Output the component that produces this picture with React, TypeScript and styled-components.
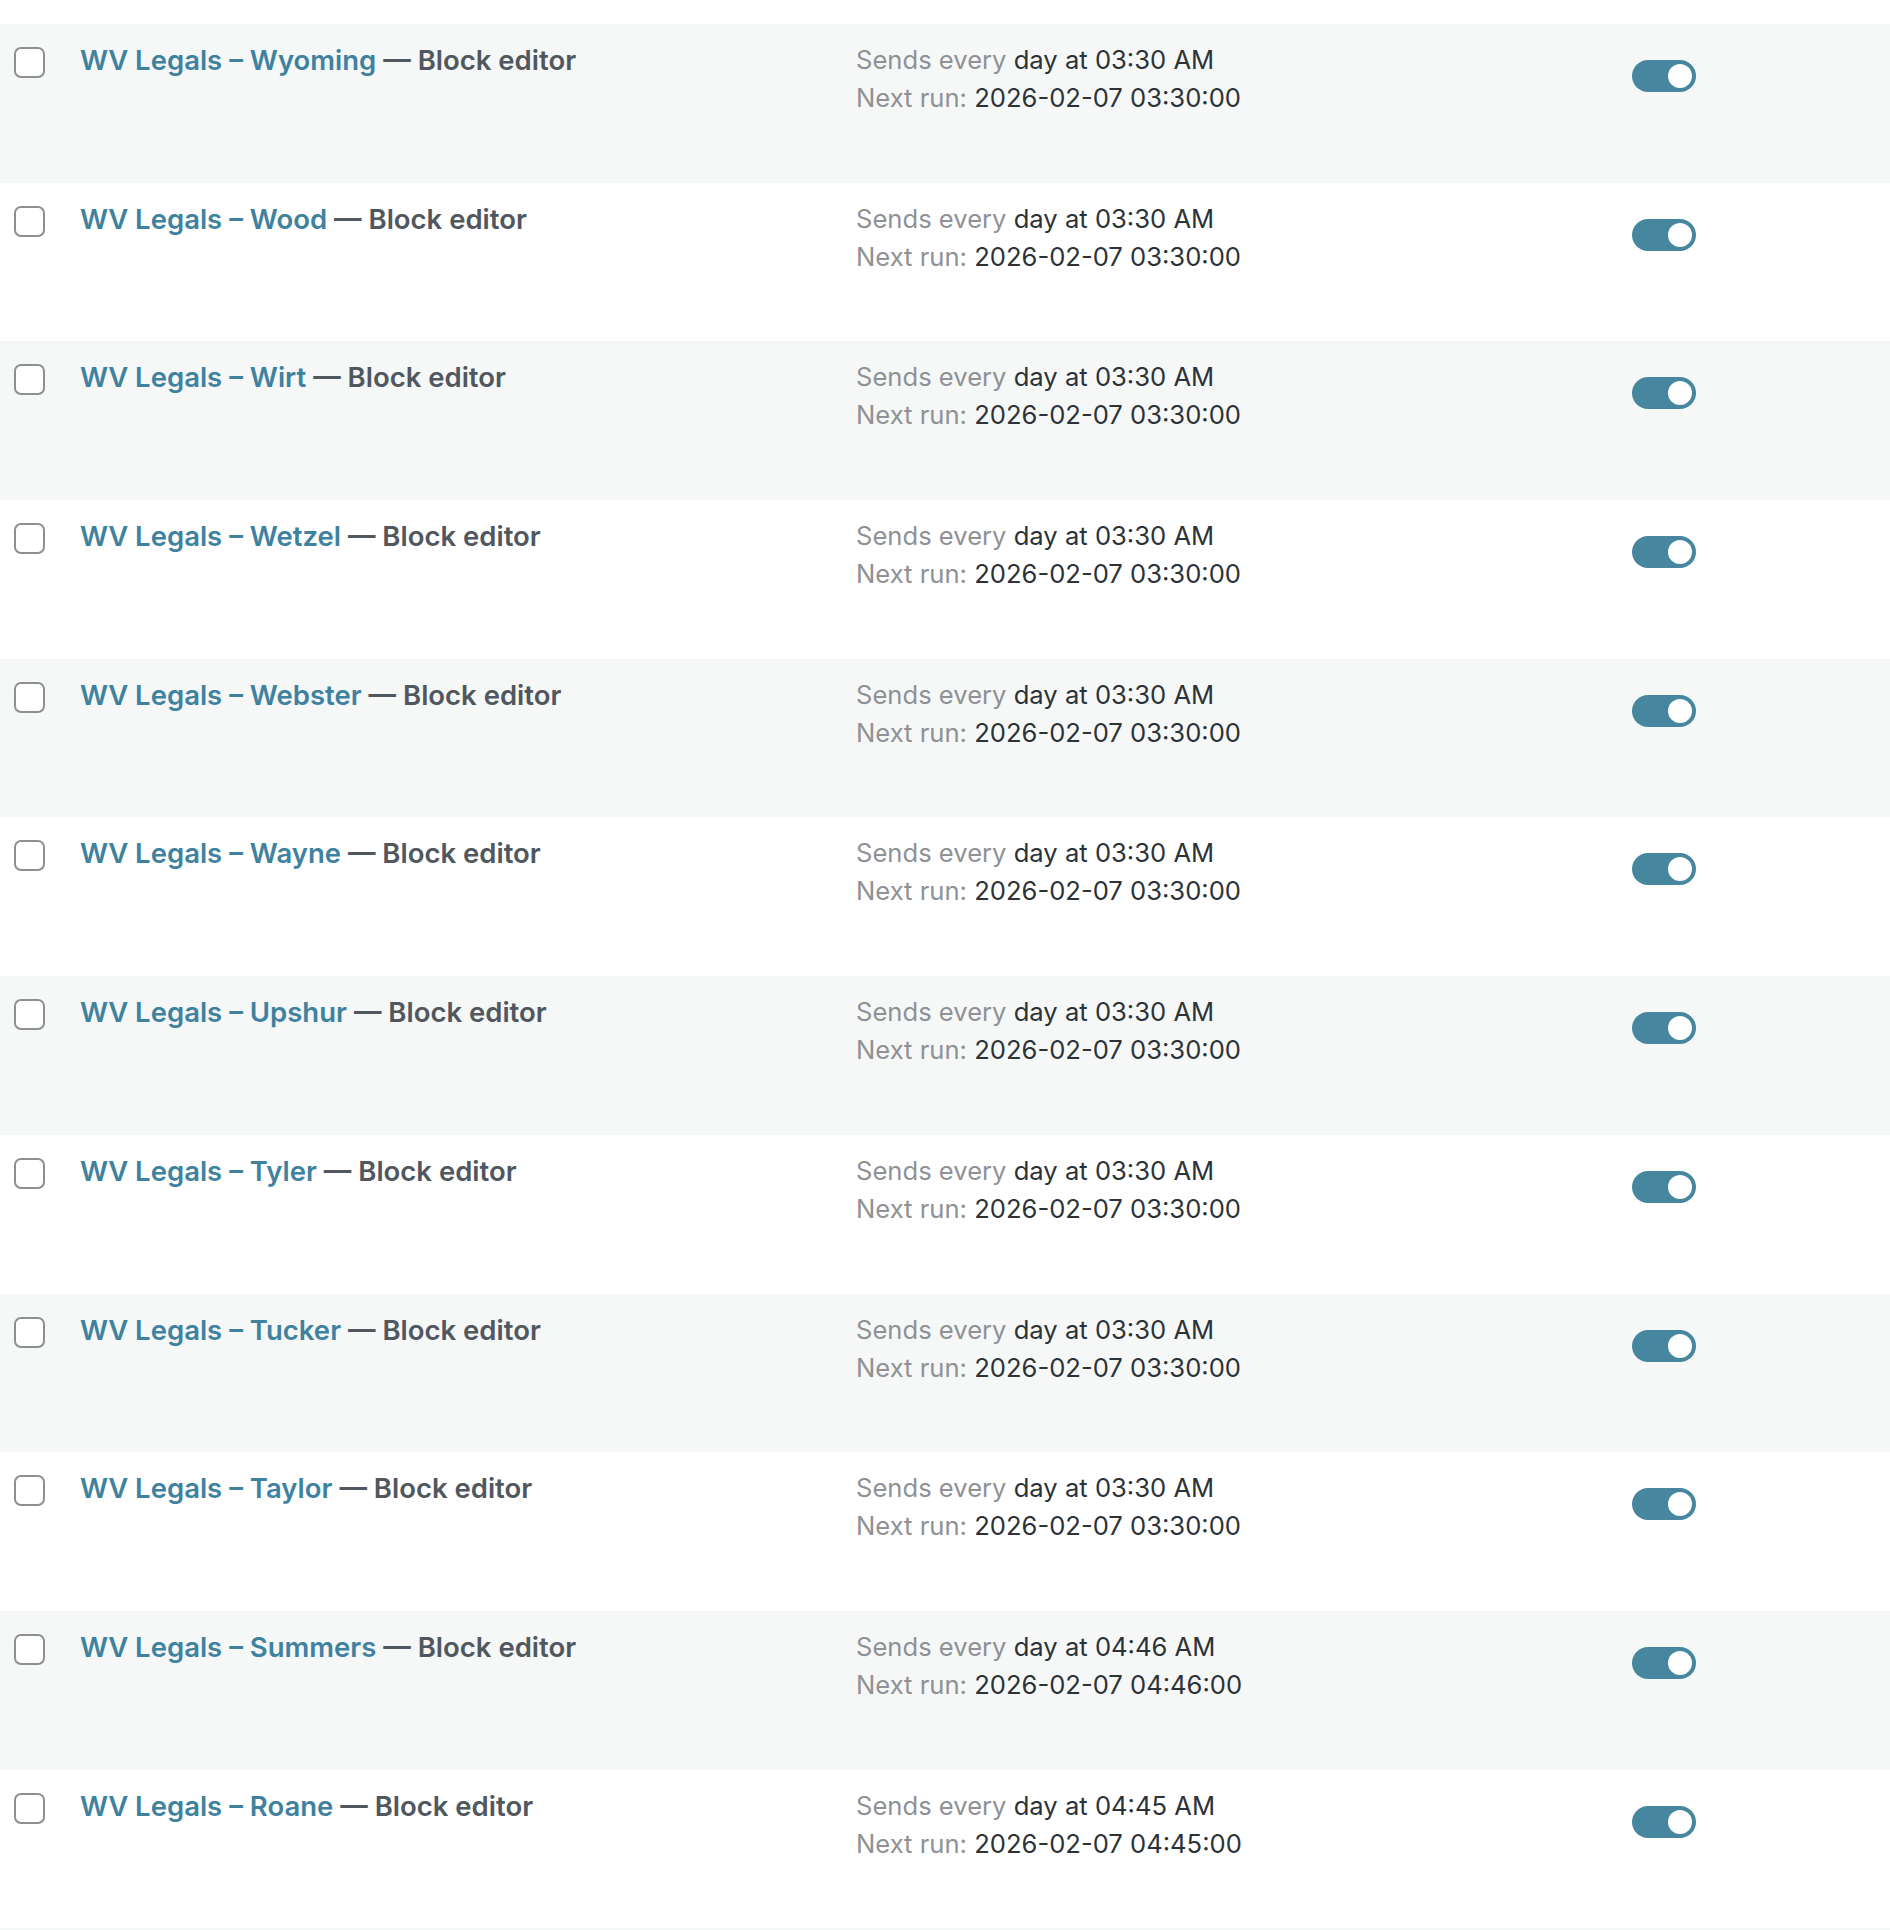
import React from 'react'
import { createGlobalStyle, styled } from 'styled-components'

const GlobalStyle = createGlobalStyle`
  html, body {
    margin: 0;
    padding: 0;
    background: #ffffff;
  }
  body {
    font-family: Inter, "Noto Sans", "Liberation Sans", sans-serif;
    -webkit-font-smoothing: antialiased;
  }
`

const Table = styled.div`
  padding-top: 24px;
  width: 100%;
`

const Row = styled.div<{ $striped: boolean }>`
  display: grid;
  grid-template-columns: 80px 776px 776px 1fr;
  height: 158.7px;
  box-sizing: border-box;
  background: ${({ $striped }) => ($striped ? '#f6f7f7' : '#ffffff')};
`

const TailStripe = styled.div`
  height: 6px;
  background: #f6f7f7;
`

const CheckCell = styled.div`
  padding: 23px 0 0 14px;
`

const Checkbox = styled.span`
  display: block;
  width: 31px;
  height: 31px;
  box-sizing: border-box;
  border: 2px solid #8c8f94;
  border-radius: 7px;
  background: #ffffff;
`

const TitleCell = styled.div`
  padding-top: 17px;
  font-size: 27.5px;
  font-weight: 600;
  line-height: 38px;
  color: #50575e;
  white-space: nowrap;
`

const TitleLink = styled.a`
  color: #3f82a0;
  text-decoration: none;
`

const ScheduleCell = styled.div`
  padding-top: 17px;
  font-size: 25.6px;
  line-height: 38px;
  color: #2c3338;
  white-space: nowrap;
`

const Muted = styled.span`
  color: #8f9194;
`

const ToggleCell = styled.div`
  padding-top: 36px;
`

const Toggle = styled.span<{ $on: boolean }>`
  position: relative;
  display: block;
  width: 64px;
  height: 32px;
  border-radius: 16px;
  background: ${({ $on }) => ($on ? '#46869f' : '#c3c4c7')};

  &::after {
    content: '';
    position: absolute;
    top: 4px;
    left: ${({ $on }) => ($on ? '36px' : '4px')};
    width: 24px;
    height: 24px;
    border-radius: 50%;
    background: #ffffff;
  }
`

type Legal = {
  county: string
  time: string
  next: string
}

const legals: Legal[] = [
  { county: 'Wyoming', time: '03:30 AM', next: '2026-02-07 03:30:00' },
  { county: 'Wood', time: '03:30 AM', next: '2026-02-07 03:30:00' },
  { county: 'Wirt', time: '03:30 AM', next: '2026-02-07 03:30:00' },
  { county: 'Wetzel', time: '03:30 AM', next: '2026-02-07 03:30:00' },
  { county: 'Webster', time: '03:30 AM', next: '2026-02-07 03:30:00' },
  { county: 'Wayne', time: '03:30 AM', next: '2026-02-07 03:30:00' },
  { county: 'Upshur', time: '03:30 AM', next: '2026-02-07 03:30:00' },
  { county: 'Tyler', time: '03:30 AM', next: '2026-02-07 03:30:00' },
  { county: 'Tucker', time: '03:30 AM', next: '2026-02-07 03:30:00' },
  { county: 'Taylor', time: '03:30 AM', next: '2026-02-07 03:30:00' },
  { county: 'Summers', time: '04:46 AM', next: '2026-02-07 04:46:00' },
  { county: 'Roane', time: '04:45 AM', next: '2026-02-07 04:45:00' },
]

export default function App() {
  return (
    <>
      <GlobalStyle />
      <Table>
        {legals.map((item, i) => (
          <Row key={item.county} $striped={i % 2 === 0}>
            <CheckCell>
              <Checkbox />
            </CheckCell>
            <TitleCell>
              <TitleLink href="#">WV Legals – {item.county}</TitleLink> — Block editor
            </TitleCell>
            <ScheduleCell>
              <div>
                <Muted>Sends every</Muted> day at {item.time}
              </div>
              <div>
                <Muted>Next run:</Muted> {item.next}
              </div>
            </ScheduleCell>
            <ToggleCell>
              <Toggle $on={true} />
            </ToggleCell>
          </Row>
        ))}
        <TailStripe />
      </Table>
    </>
  )
}
